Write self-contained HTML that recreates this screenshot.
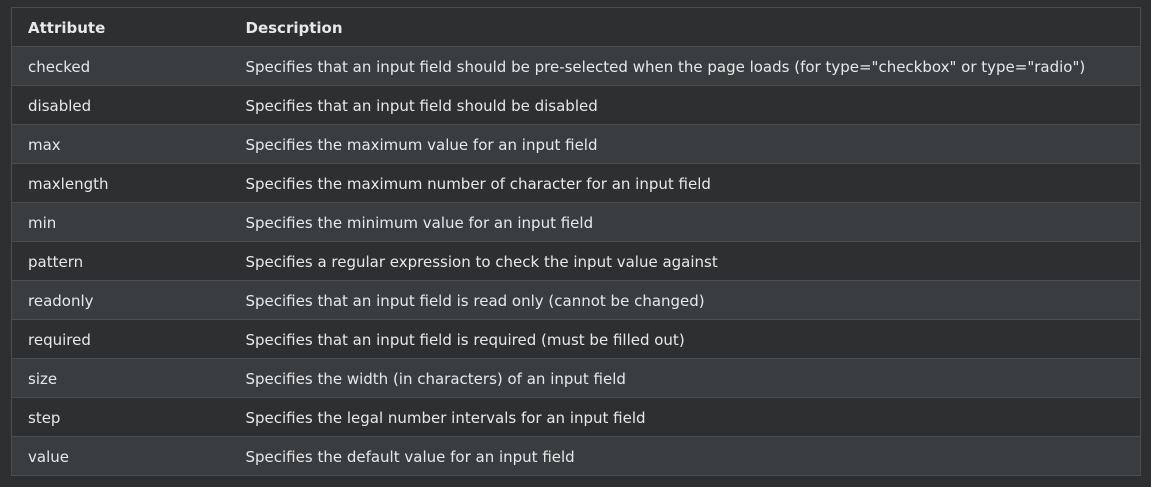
<!DOCTYPE html>
<html><head><style>
html,body{margin:0;padding:0;background:#2e2f31;width:1151px;height:487px;overflow:hidden}
table{position:absolute;left:11px;top:7px;width:1130px;border-collapse:collapse;border:1px solid #4a4c4f;font-family:"DejaVu Sans",sans-serif;font-size:15px;color:#e8e8e8}
td,th{height:39px;box-sizing:border-box;padding:1px 0 0 16px;text-align:left;border-top:1px solid #4a4c4f;vertical-align:middle}
th{font-weight:bold}
td:first-child,th:first-child{width:218px}
tr:nth-child(even){background:#3a3d40}
tr{background:#2e2f31}
</style></head><body>
<table>
<tr><th>Attribute</th><th>Description</th></tr>
<tr><td>checked</td><td>Specifies that an input field should be pre-selected when the page loads (for type="checkbox" or type="radio")</td></tr>
<tr><td>disabled</td><td>Specifies that an input field should be disabled</td></tr>
<tr><td>max</td><td>Specifies the maximum value for an input field</td></tr>
<tr><td>maxlength</td><td>Specifies the maximum number of character for an input field</td></tr>
<tr><td>min</td><td>Specifies the minimum value for an input field</td></tr>
<tr><td>pattern</td><td>Specifies a regular expression to check the input value against</td></tr>
<tr><td>readonly</td><td>Specifies that an input field is read only (cannot be changed)</td></tr>
<tr><td>required</td><td>Specifies that an input field is required (must be filled out)</td></tr>
<tr><td>size</td><td>Specifies the width (in characters) of an input field</td></tr>
<tr><td>step</td><td>Specifies the legal number intervals for an input field</td></tr>
<tr><td>value</td><td>Specifies the default value for an input field</td></tr>
</table>
</body></html>
